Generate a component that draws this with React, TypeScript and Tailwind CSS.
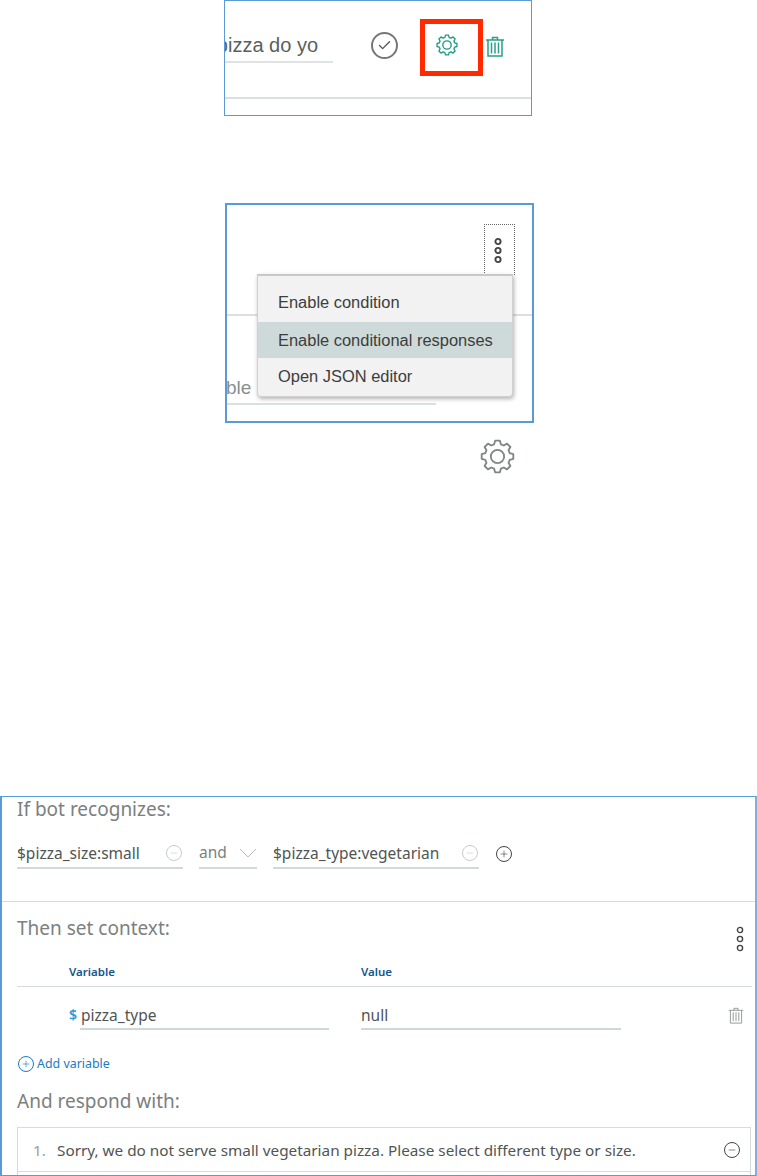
import { Check, Plus, Minus } from 'lucide-react';

function gearPath() {
  const pts: string[] = [];
  for (let i = 0; i < 8; i++) {
    const a = (i * 45 - 90) * (Math.PI / 180);
    const offsets: [number, number][] = [[-0.27, 15.2], [-0.15, 19.2], [0.15, 19.2], [0.27, 15.2]];
    for (const [d, r] of offsets) {
      pts.push(`${(Math.cos(a + d) * r).toFixed(2)} ${(Math.sin(a + d) * r).toFixed(2)}`);
    }
  }
  return `M${pts.join('L')}Z`;
}

function Gear({ className, strokeWidth }: { className: string; strokeWidth: number }) {
  return (
    <svg viewBox="-21 -21 42 42" fill="none" stroke="currentColor" strokeWidth={strokeWidth} strokeLinejoin="round" className={className}>
      <path d={gearPath()} />
      <circle cx="0" cy="0" r="8" />
    </svg>
  );
}

function Trash({ className, strokeWidth = 1 }: { className: string; strokeWidth?: number }) {
  return (
    <svg viewBox="0 0 20 20" fill="none" stroke="currentColor" strokeWidth={strokeWidth} className={className}>
      <path d="M1 3.5h18M7.5 3.5V1h5v2.5M3 3.5V19.5h14V3.5M6.5 6v11M10 6v11M13.5 6v11" />
    </svg>
  );
}

function Kebab({ className, strokeWidth = 1.4 }: { className: string; strokeWidth?: number }) {
  return (
    <svg viewBox="0 0 8 26" fill="none" stroke="currentColor" strokeWidth={strokeWidth} className={className}>
      <circle cx="4" cy="4" r="2.6" />
      <circle cx="4" cy="13" r="2.6" />
      <circle cx="4" cy="22" r="2.6" />
    </svg>
  );
}

function RoundIcon({ kind, className }: { kind: 'plus' | 'minus'; className: string }) {
  const Icon = kind === 'plus' ? Plus : Minus;
  return (
    <span className={`flex items-center justify-center rounded-full border ${className}`}>
      <Icon className="w-[10px] h-[10px]" strokeWidth={1.5} />
    </span>
  );
}

function ConditionField({ text, width }: { text: string; width: string }) {
  return (
    <div className={`flex items-center justify-between h-[30px] border-b-2 border-[#d3d9d9] ${width}`}>
      <span>{text}</span>
      <RoundIcon kind="minus" className="w-4 h-4 border-[#c5cccc] text-[#c5cccc] mr-[1px]" />
    </div>
  );
}

export default function App() {
  return (
    <div className="relative w-[757px] h-[1176px] bg-white overflow-hidden font-['Noto_Sans',sans-serif]">
      {/* top crop: dialog node row */}
      <div className="relative ml-[224px] w-[308px] h-[116px] border border-[#5b9bd5] overflow-hidden font-['Liberation_Sans',sans-serif]">
        <div className="flex items-start h-[98px] border-b-2 border-[#dcdfdf]">
          <div className="mt-[26px] w-[108px] h-[36px] flex justify-end overflow-hidden whitespace-nowrap border-b-2 border-[#dfe3e3] text-[20px] leading-[36px] text-[#595f5f] pr-[15px]">
            <span className="shrink-0">pizza do yo</span>
          </div>
          <span className="ml-[38px] mt-[31px] w-[27px] h-[27px] rounded-full border-2 border-[#777] flex items-center justify-center text-[#555]">
            <Check className="w-[15px] h-[15px]" strokeWidth={2.2} />
          </span>
          <span className="ml-[22px] mt-[18px] w-[63px] h-[57px] border-[5px] border-[#ff2a00] flex items-center justify-center text-[#1f9c85] shrink-0">
            <Gear className="w-[22px] h-[22px] -mt-[6px] -ml-[10px]" strokeWidth={2.6} />
          </span>
          <span className="ml-[2px] mt-[35px] text-[#2a9f8b]">
            <Trash className="w-[20px] h-[21px]" strokeWidth={1.5} />
          </span>
        </div>
      </div>

      {/* middle crop: overflow menu */}
      <div className="relative ml-[225px] mt-[87px] w-[309px] h-[220px] border-2 border-[#5b9bd5] overflow-hidden font-['Liberation_Sans',sans-serif]">
        <div className="h-[111px] border-b-2 border-[#dedede]" />
        <div className="flex items-end h-[89px] text-[19px] leading-[26px] text-[#8a8f8f]">
          <div className="w-[210px] h-[34px] -ml-[1px] pt-[4px] border-b-2 border-[#d8e0e0] flex justify-start overflow-hidden">
            <span>ble</span>
          </div>
        </div>
        <div className="absolute left-[257px] top-[19px] w-[31px] h-[51px] border border-dotted border-[#666] flex justify-center pt-[12px] pr-[3px] text-[#444]">
          <Kebab className="w-[8px] h-[27px]" strokeWidth={1.9} />
        </div>
        <div className="absolute left-[30px] top-[69px] w-[256px] h-[123px] bg-[#f2f2f2] rounded-b-[4px] border-t-2 border-[#c8c8c8] border-x border-b border-x-[#d0d0d0] border-b-[#d0d0d0] shadow-[1px_2px_4px_rgba(0,0,0,0.3)] text-[16.45px] text-[#3d3d3d] pt-[9px]">
          <div className="h-[37px] pl-[20px] pb-[2px] flex items-center">Enable condition</div>
          <div className="h-[36px] pl-[20px] flex items-center bg-[#cddad9]">Enable conditional responses</div>
          <div className="h-[36px] pl-[20px] flex items-center">Open JSON editor</div>
        </div>
      </div>
      <div className="ml-[480px] mt-[16px] text-[#808585]">
        <Gear className="w-[35px] h-[35px]" strokeWidth={2.2} />
      </div>

      {/* bottom crop: conditional response */}
      <div className="absolute left-0 right-0 top-[796px] h-[380px] border-x-2 border-y border-[#5b9bd5] border-r-[#7fb0dc] overflow-hidden text-[#4f5555]">
        <div className="h-[105px] border-b border-[#d8dbdb] pl-[15px]">
          <h2 className="text-[19px] leading-[24px] text-[#7b8080]">If bot recognizes:</h2>
          <div className="flex items-start mt-[18px] text-[15.5px] leading-[30px]">
            <ConditionField text="$pizza_size:small" width="w-[166px]" />
            <div className="ml-[16px] w-[58px] h-[30px] border-b-2 border-[#d3d9d9] flex justify-between items-start text-[#7b8080] leading-[26px]">
              <span>and</span>
              <svg viewBox="0 0 18 10" fill="none" stroke="currentColor" className="w-[18px] h-[10px] mt-[9px] text-[#b5bbbb]">
                <path d="M1 1l8 8 8-8" />
              </svg>
            </div>
            <ConditionField text="$pizza_type:vegetarian" width="ml-[16px] w-[206px]" />
            <RoundIcon kind="plus" className="ml-[17px] mt-[7px] w-4 h-4 border-[#444] text-[#444]" />
          </div>
        </div>
        <div className="relative pl-[15px] pr-[3px]">
          <h2 className="mt-[14px] text-[19px] leading-[24px] text-[#7b8080]">Then set context:</h2>
          <Kebab className="absolute right-[11px] top-[10px] w-[8px] h-[26px] text-[#444]" />
          <div className="flex mt-[24px] pl-[52px] h-[23px] border-b border-[#d8dbdb] text-[11.5px] leading-[16px] font-semibold text-[#14568c]">
            <span className="w-[292px]">Variable</span>
            <span>Value</span>
          </div>
          <div className="flex items-start mt-[14px] pl-[52px] text-[15.5px] leading-[28px]">
            <span className="w-[11px] text-[#1b9ce5] font-semibold text-[14px]">$</span>
            <div className="w-[249px] h-[29px] border-b-2 border-[#cdd8d8] pl-[1px]">pizza_type</div>
            <div className="ml-[32px] w-[260px] h-[29px] border-b-2 border-[#cdd8d8]">null</div>
            <Trash className="ml-[107px] mt-[6px] w-[16px] h-[17px] text-[#7d8383]" />
          </div>
          <div className="flex items-center mt-[26px] pl-[1px] text-[12.4px] leading-[16px] text-[#1a7cc5]">
            <RoundIcon kind="plus" className="w-4 h-4 border-[#1a7cc5] mr-[3px]" />
            <span>Add variable</span>
          </div>
          <h2 className="mt-[17px] text-[19px] leading-[24px] text-[#7b8080]">And respond with:</h2>
          <div className="mt-[14px] h-[60px] border border-[#d8dbdb] mr-[1px]">
            <div className="h-[44px] pt-[1px] border-b border-[#d8dbdb] flex items-center text-[15.3px]">
              <span className="ml-[15px] w-[24px] text-[#9aa0a0]">1.</span>
              <span className="flex-1">Sorry, we do not serve small vegetarian pizza. Please select different type or size.</span>
              <RoundIcon kind="minus" className="mr-[10px] w-4 h-4 border-[#444] text-[#444]" />
            </div>
          </div>
        </div>
      </div>
    </div>
  );
}
